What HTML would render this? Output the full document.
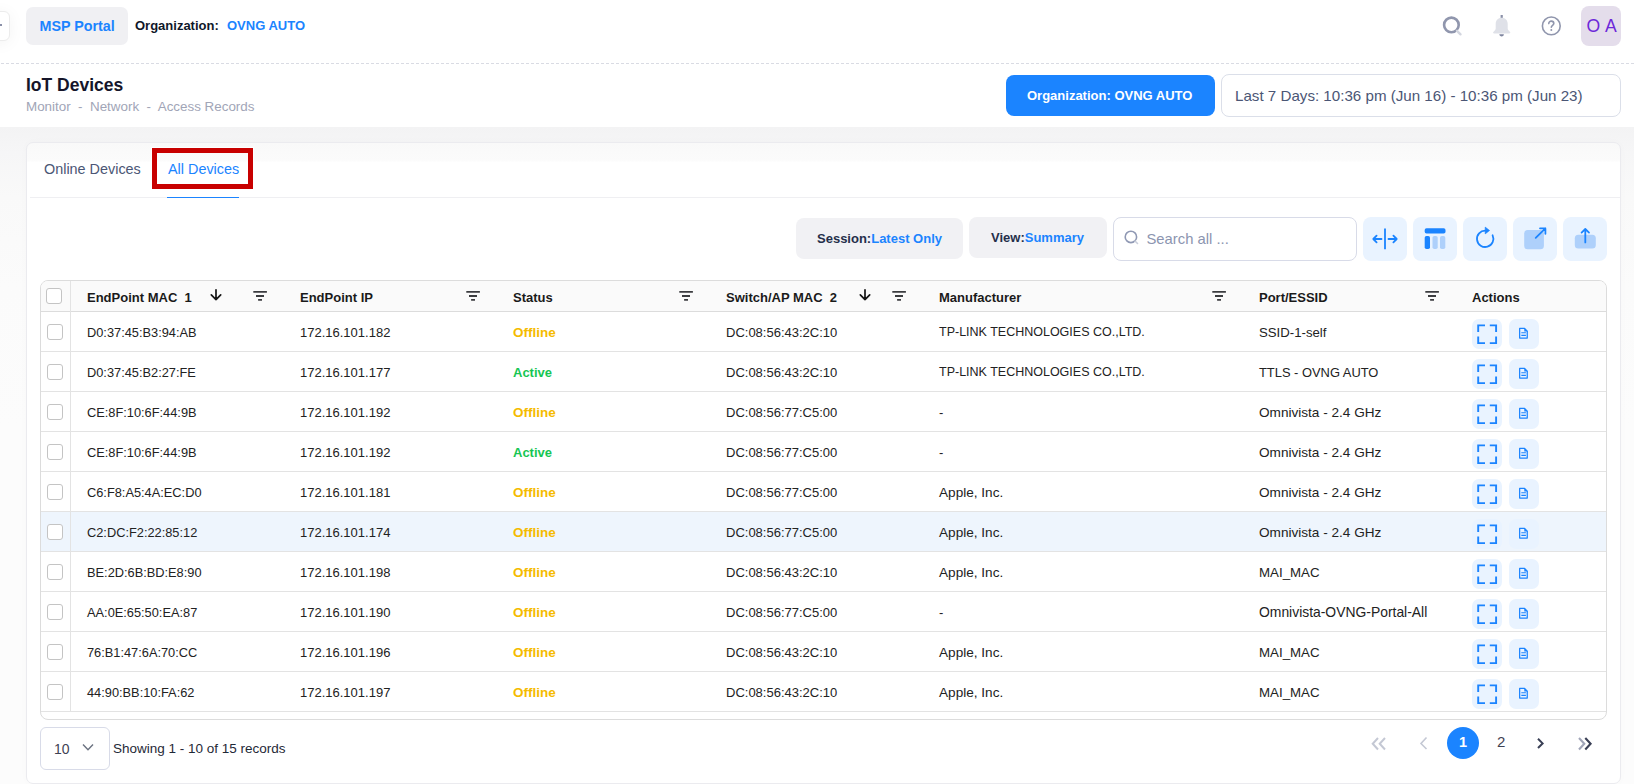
<!DOCTYPE html>
<html><head><meta charset="utf-8">
<style>
*{box-sizing:border-box;margin:0;padding:0}
html,body{width:1634px;height:784px;overflow:hidden;background:#fff;font-family:"Liberation Sans",sans-serif;position:relative}
.a{position:absolute}
.t{position:absolute;white-space:pre;line-height:1}
svg{position:absolute;overflow:visible}
#gray{left:0;top:127px;width:1634px;height:657px;background:linear-gradient(180deg,#f3f3f4 0px,#f6f6f7 25px,#f9f9f9 70px,#fbfbfb 160px,#fcfcfc 300px,#fcfcfc 657px)}
#card{left:26px;top:142px;width:1595px;height:642px;background:linear-gradient(180deg,#f9f9f9 0px,#fbfbfb 17px,#fff 19.5px);border:1px solid #ebebef;border-radius:7px;box-shadow:0 0 8px rgba(0,0,0,0.02)}
.btn-ic{position:absolute;top:217px;width:44px;height:44px;background:#e9f3ff;border-radius:8px}
.row{position:absolute;left:41px;width:1565px;height:40px;border-bottom:1px solid #e4e4e4}
.cb{position:absolute;width:16px;height:16px;border:1px solid #c4c4c4;border-radius:3px;background:#fff}
.cell{position:absolute;white-space:pre;line-height:1;font-size:13px;color:#222}
.act{position:absolute;width:30px;height:30px;background:#e9f3ff;border-radius:7px}
</style></head><body>

<!-- top bar -->
<div class="a" style="left:-22px;top:11px;width:32px;height:30px;border:1px solid #ececec;border-radius:6px;box-shadow:0 2px 16px rgba(0,0,0,0.05);background:#fff"></div><div class="a" style="left:0;top:24px;width:2px;height:1.5px;background:#8a90a8"></div>
<div class="a" style="left:26px;top:7px;width:102px;height:38px;background:#f0f0f3;border-radius:7px"></div>
<div class="t" style="left:39.5px;top:18.7px;font-size:14.3px;font-weight:700;color:#1b84ff">MSP Portal</div>
<div class="t" style="left:135px;top:19px;font-size:13px;font-weight:700;color:#0f172a">Organization:</div>
<div class="t" style="left:227px;top:19px;font-size:13px;font-weight:700;color:#1b84ff">OVNG AUTO</div>

<div class="a" style="left:1px;top:63px;width:1633px;height:1px;background:repeating-linear-gradient(90deg,#d9dbe3 0 3px,transparent 3px 5px)"></div>

<!-- header -->
<div class="t" style="left:26px;top:77px;font-size:17.5px;font-weight:700;color:#15152a">IoT Devices</div>
<div class="t" style="left:26px;top:100px;font-size:13.4px;color:#a1a5b7">Monitor  -  Network  -  Access Records</div>
<div class="a" style="left:1006px;top:75px;width:209px;height:41px;background:#1b84ff;border-radius:8px"></div>
<div class="t" style="left:1027px;top:89px;font-size:13px;font-weight:700;color:#fff">Organization: OVNG AUTO</div>
<div class="a" style="left:1221px;top:74px;width:400px;height:43px;border:1px solid #dbdfe9;border-radius:8px"></div>
<div class="t" style="left:1235px;top:88px;font-size:15.15px;color:#4b5675">Last 7 Days: 10:36 pm (Jun 16) - 10:36 pm (Jun 23)</div>

<div id="gray" class="a"></div>
<div id="card" class="a"></div>

<!-- tabs -->
<div class="t" style="left:44px;top:162px;font-size:14.4px;color:#4b5675">Online Devices</div>
<div class="t" style="left:168px;top:162px;font-size:14.4px;color:#1b84ff">All Devices</div>
<div class="a" style="left:30px;top:197px;width:1590px;height:1px;background:#efeff2"></div>
<div class="a" style="left:167px;top:197px;width:72px;height:1px;background:#1b84ff;box-shadow:0 0 0.5px #1b84ff"></div>
<div class="a" style="left:152px;top:148px;width:101px;height:41px;border:5px solid #c80000;box-shadow:0 0 0 1px rgba(255,255,255,0.9)"></div>


<!-- toolbar -->
<div class="a" style="left:796px;top:218px;width:167px;height:41px;background:#f1f1f4;border-radius:8px"></div>
<div class="t" style="left:817px;top:232px;font-size:13px;font-weight:700;color:#252f4a">Session:<span style="color:#1b84ff">Latest Only</span></div>
<div class="a" style="left:969px;top:217px;width:138px;height:41px;background:#f1f1f4;border-radius:8px"></div>
<div class="t" style="left:991px;top:231px;font-size:13px;font-weight:700;color:#252f4a">View:<span style="color:#1b84ff">Summary</span></div>
<div class="a" style="left:1113px;top:217px;width:244px;height:44px;border:1px solid #d8dbe8;border-radius:8px;background:#fff"></div>
<svg style="left:1124px;top:230px" width="16" height="16" viewBox="0 0 16 16"><circle cx="6.9" cy="6.9" r="5.7" fill="none" stroke="#8f98b3" stroke-width="1.6"/><line x1="11" y1="11" x2="13.5" y2="13.5" stroke="#c9cedb" stroke-width="1.6" stroke-linecap="round"/></svg>
<div class="t" style="left:1146.5px;top:231.5px;font-size:14.8px;color:#8c95b0">Search all ...</div>

<div class="btn-ic" style="left:1363px"></div>
<div class="btn-ic" style="left:1413px"></div>
<div class="btn-ic" style="left:1463px"></div>
<div class="btn-ic" style="left:1513px"></div>
<div class="btn-ic" style="left:1563px"></div>

<svg style="left:1363px;top:217px" width="44" height="44" viewBox="0 0 44 44">
 <line x1="22" y1="11.6" x2="22" y2="32.2" stroke="#1b84ff" stroke-width="1.8"/>
 <path d="M10.3 22H18.5M13.6 18.6L10.3 22L13.6 25.4" fill="none" stroke="#1b84ff" stroke-width="1.8" stroke-linecap="round" stroke-linejoin="round"/>
 <path d="M25.5 22H33.7M30.4 18.6L33.7 22L30.4 25.4" fill="none" stroke="#1b84ff" stroke-width="1.8" stroke-linecap="round" stroke-linejoin="round"/>
</svg>
<svg style="left:1413px;top:217px" width="44" height="44" viewBox="0 0 44 44">
 <rect x="11.7" y="11.3" width="20.8" height="5.2" rx="1.8" fill="#1b84ff"/>
 <rect x="11.7" y="19" width="5.3" height="13" rx="1.8" fill="#1b84ff"/>
 <rect x="19.5" y="19" width="5.2" height="13" rx="1.8" fill="#aed0fb"/>
 <rect x="27" y="19" width="5.3" height="13" rx="1.8" fill="#aed0fb"/>
</svg>
<svg style="left:1463px;top:217px" width="44" height="44" viewBox="0 0 44 44">
 <path d="M22.4 13.6A8.2 8.2 0 1 0 29.6 18.3" fill="none" stroke="#1b84ff" stroke-width="1.8" stroke-linecap="round"/>
 <path d="M22.2 10.1L26.6 13.5L22.2 16.9Z" fill="#1b84ff" stroke="#1b84ff" stroke-width="0.6" stroke-linejoin="round"/>
</svg>
<svg style="left:1513px;top:217px" width="44" height="44" viewBox="0 0 44 44">
 <rect x="11.2" y="12.9" width="19.7" height="19.4" rx="3.5" fill="#aed0fb"/>
 <path d="M22.7 20.8L32.4 11.3M27 11.3H32.4V16.8" fill="none" stroke="#1b84ff" stroke-width="1.8" stroke-linecap="round" stroke-linejoin="round"/>
</svg>
<svg style="left:1563px;top:217px" width="44" height="44" viewBox="0 0 44 44">
 <rect x="11.8" y="17.8" width="21" height="13.8" rx="3.5" fill="#aed0fb"/>
 <path d="M22.3 25.4V12M18.6 15.6L22.3 12L26 15.6" fill="none" stroke="#1b84ff" stroke-width="1.8" stroke-linecap="round" stroke-linejoin="round"/>
</svg>

<div class="a" style="left:40px;top:280px;width:1567px;height:440px;border:1px solid #dcdcdc;border-radius:8px;overflow:hidden;background:#fff">
<div class="a" style="left:0;top:0;width:1565px;height:31px;background:#fafafa;border-bottom:1px solid #dcdcdc"></div>
</div>
<div class="a" style="left:41px;top:512px;width:1565px;height:39px;background:#eef5fd"></div>
<div class="a" style="left:41px;top:351px;width:1565px;height:1px;background:#e3e3e3"></div>
<div class="a" style="left:41px;top:391px;width:1565px;height:1px;background:#e3e3e3"></div>
<div class="a" style="left:41px;top:431px;width:1565px;height:1px;background:#e3e3e3"></div>
<div class="a" style="left:41px;top:471px;width:1565px;height:1px;background:#e3e3e3"></div>
<div class="a" style="left:41px;top:511px;width:1565px;height:1px;background:#e3e3e3"></div>
<div class="a" style="left:41px;top:551px;width:1565px;height:1px;background:#e3e3e3"></div>
<div class="a" style="left:41px;top:591px;width:1565px;height:1px;background:#e3e3e3"></div>
<div class="a" style="left:41px;top:631px;width:1565px;height:1px;background:#e3e3e3"></div>
<div class="a" style="left:41px;top:671px;width:1565px;height:1px;background:#e3e3e3"></div>
<div class="a" style="left:41px;top:711px;width:1565px;height:1px;background:#e3e3e3"></div>
<div class="a" style="left:70px;top:281px;width:1px;height:430px;background:#e3e3e3"></div>
<div class="cell" style="left:87px;top:291px;font-weight:700;color:#1a1a1a">EndPoint MAC  1</div>
<div class="cell" style="left:300px;top:291px;font-weight:700;color:#1a1a1a">EndPoint IP</div>
<div class="cell" style="left:513px;top:291px;font-weight:700;color:#1a1a1a">Status</div>
<div class="cell" style="left:726px;top:291px;font-weight:700;color:#1a1a1a">Switch/AP MAC  2</div>
<div class="cell" style="left:939px;top:291px;font-weight:700;color:#1a1a1a">Manufacturer</div>
<div class="cell" style="left:1259px;top:291px;font-weight:700;color:#1a1a1a">Port/ESSID</div>
<div class="cell" style="left:1472px;top:291px;font-weight:700;color:#1a1a1a">Actions</div>
<svg style="left:210px;top:290px" width="12" height="12" viewBox="0 0 12 12"><path d="M6 -0.2V9.6M1.3 4.8L6 9.6L10.7 4.8" fill="none" stroke="#151515" stroke-width="1.7" stroke-linecap="round" stroke-linejoin="round"/></svg>
<svg style="left:859px;top:290px" width="12" height="12" viewBox="0 0 12 12"><path d="M6 -0.2V9.6M1.3 4.8L6 9.6L10.7 4.8" fill="none" stroke="#151515" stroke-width="1.7" stroke-linecap="round" stroke-linejoin="round"/></svg>
<svg style="left:253px;top:290px" width="14" height="11" viewBox="0 0 14 11"><path d="M0.3 1.9H13.9M3 6H11M5.1 9.9H9" fill="none" stroke="#3c3d40" stroke-width="1.8"/></svg>
<svg style="left:466px;top:290px" width="14" height="11" viewBox="0 0 14 11"><path d="M0.3 1.9H13.9M3 6H11M5.1 9.9H9" fill="none" stroke="#3c3d40" stroke-width="1.8"/></svg>
<svg style="left:678.5px;top:290px" width="14" height="11" viewBox="0 0 14 11"><path d="M0.3 1.9H13.9M3 6H11M5.1 9.9H9" fill="none" stroke="#3c3d40" stroke-width="1.8"/></svg>
<svg style="left:892px;top:290px" width="14" height="11" viewBox="0 0 14 11"><path d="M0.3 1.9H13.9M3 6H11M5.1 9.9H9" fill="none" stroke="#3c3d40" stroke-width="1.8"/></svg>
<svg style="left:1211.5px;top:290px" width="14" height="11" viewBox="0 0 14 11"><path d="M0.3 1.9H13.9M3 6H11M5.1 9.9H9" fill="none" stroke="#3c3d40" stroke-width="1.8"/></svg>
<svg style="left:1425px;top:290px" width="14" height="11" viewBox="0 0 14 11"><path d="M0.3 1.9H13.9M3 6H11M5.1 9.9H9" fill="none" stroke="#3c3d40" stroke-width="1.8"/></svg>
<div class="cb" style="left:46px;top:288px;width:15.5px;height:15.5px"></div>
<div class="cb" style="left:47px;top:324px"></div>
<div class="cell" style="left:87px;top:326px;font-size:12.8px;line-height:13px;">D0:37:45:B3:94:AB</div>
<div class="cell" style="left:300px;top:326px;">172.16.101.182</div>
<div class="cell" style="left:513px;top:326px;font-size:13.5px;line-height:13px;font-weight:700;color:#f5bb00">Offline</div>
<div class="cell" style="left:726px;top:326px;">DC:08:56:43:2C:10</div>
<div class="cell" style="left:939px;top:326px;font-size:12.5px;line-height:13px;">TP-LINK TECHNOLOGIES CO.,LTD.</div>
<div class="cell" style="left:1259px;top:326px;font-size:13.2px;line-height:13px;">SSID-1-self</div>
<div class="act" style="left:1472px;top:319px"></div>
<div class="act" style="left:1509px;top:319px"></div>
<svg style="left:1472px;top:319px" width="30" height="30" viewBox="0 0 30 30"><path d="M6.2 13V6.4H13M17.8 6.4H24.1V13M24.1 17.6V24.1H17.8M13 24.1H6.2V17.6" fill="none" stroke="#1b84ff" stroke-width="1.9"/></svg>
<svg style="left:1509px;top:319px" width="30" height="30" viewBox="0 0 30 30"><path d="M10.65 9.45H15.6L18.25 12.1V19.05H10.65Z" fill="none" stroke="#1b84ff" stroke-width="1.25" stroke-linejoin="round"/><path d="M15.3 9.1L18.8 12.6H15.3Z" fill="#1b84ff"/><path d="M12.3 13.7H16.9M12.3 16.3H16.9" stroke="#1b84ff" stroke-width="1.15"/></svg>
<div class="cb" style="left:47px;top:364px"></div>
<div class="cell" style="left:87px;top:366px;font-size:12.8px;line-height:13px;">D0:37:45:B2:27:FE</div>
<div class="cell" style="left:300px;top:366px;">172.16.101.177</div>
<div class="cell" style="left:513px;top:366px;font-weight:700;color:#17c653">Active</div>
<div class="cell" style="left:726px;top:366px;">DC:08:56:43:2C:10</div>
<div class="cell" style="left:939px;top:366px;font-size:12.5px;line-height:13px;">TP-LINK TECHNOLOGIES CO.,LTD.</div>
<div class="cell" style="left:1259px;top:366px;font-size:12.9px;line-height:13px;">TTLS - OVNG AUTO</div>
<div class="act" style="left:1472px;top:359px"></div>
<div class="act" style="left:1509px;top:359px"></div>
<svg style="left:1472px;top:359px" width="30" height="30" viewBox="0 0 30 30"><path d="M6.2 13V6.4H13M17.8 6.4H24.1V13M24.1 17.6V24.1H17.8M13 24.1H6.2V17.6" fill="none" stroke="#1b84ff" stroke-width="1.9"/></svg>
<svg style="left:1509px;top:359px" width="30" height="30" viewBox="0 0 30 30"><path d="M10.65 9.45H15.6L18.25 12.1V19.05H10.65Z" fill="none" stroke="#1b84ff" stroke-width="1.25" stroke-linejoin="round"/><path d="M15.3 9.1L18.8 12.6H15.3Z" fill="#1b84ff"/><path d="M12.3 13.7H16.9M12.3 16.3H16.9" stroke="#1b84ff" stroke-width="1.15"/></svg>
<div class="cb" style="left:47px;top:404px"></div>
<div class="cell" style="left:87px;top:406px;font-size:12.8px;line-height:13px;">CE:8F:10:6F:44:9B</div>
<div class="cell" style="left:300px;top:406px;">172.16.101.192</div>
<div class="cell" style="left:513px;top:406px;font-size:13.5px;line-height:13px;font-weight:700;color:#f5bb00">Offline</div>
<div class="cell" style="left:726px;top:406px;">DC:08:56:77:C5:00</div>
<div class="cell" style="left:939px;top:406px;">-</div>
<div class="cell" style="left:1259px;top:406px;font-size:13.6px;line-height:13px;">Omnivista - 2.4 GHz</div>
<div class="act" style="left:1472px;top:399px"></div>
<div class="act" style="left:1509px;top:399px"></div>
<svg style="left:1472px;top:399px" width="30" height="30" viewBox="0 0 30 30"><path d="M6.2 13V6.4H13M17.8 6.4H24.1V13M24.1 17.6V24.1H17.8M13 24.1H6.2V17.6" fill="none" stroke="#1b84ff" stroke-width="1.9"/></svg>
<svg style="left:1509px;top:399px" width="30" height="30" viewBox="0 0 30 30"><path d="M10.65 9.45H15.6L18.25 12.1V19.05H10.65Z" fill="none" stroke="#1b84ff" stroke-width="1.25" stroke-linejoin="round"/><path d="M15.3 9.1L18.8 12.6H15.3Z" fill="#1b84ff"/><path d="M12.3 13.7H16.9M12.3 16.3H16.9" stroke="#1b84ff" stroke-width="1.15"/></svg>
<div class="cb" style="left:47px;top:444px"></div>
<div class="cell" style="left:87px;top:446px;font-size:12.8px;line-height:13px;">CE:8F:10:6F:44:9B</div>
<div class="cell" style="left:300px;top:446px;">172.16.101.192</div>
<div class="cell" style="left:513px;top:446px;font-weight:700;color:#17c653">Active</div>
<div class="cell" style="left:726px;top:446px;">DC:08:56:77:C5:00</div>
<div class="cell" style="left:939px;top:446px;">-</div>
<div class="cell" style="left:1259px;top:446px;font-size:13.6px;line-height:13px;">Omnivista - 2.4 GHz</div>
<div class="act" style="left:1472px;top:439px"></div>
<div class="act" style="left:1509px;top:439px"></div>
<svg style="left:1472px;top:439px" width="30" height="30" viewBox="0 0 30 30"><path d="M6.2 13V6.4H13M17.8 6.4H24.1V13M24.1 17.6V24.1H17.8M13 24.1H6.2V17.6" fill="none" stroke="#1b84ff" stroke-width="1.9"/></svg>
<svg style="left:1509px;top:439px" width="30" height="30" viewBox="0 0 30 30"><path d="M10.65 9.45H15.6L18.25 12.1V19.05H10.65Z" fill="none" stroke="#1b84ff" stroke-width="1.25" stroke-linejoin="round"/><path d="M15.3 9.1L18.8 12.6H15.3Z" fill="#1b84ff"/><path d="M12.3 13.7H16.9M12.3 16.3H16.9" stroke="#1b84ff" stroke-width="1.15"/></svg>
<div class="cb" style="left:47px;top:484px"></div>
<div class="cell" style="left:87px;top:486px;font-size:12.8px;line-height:13px;">C6:F8:A5:4A:EC:D0</div>
<div class="cell" style="left:300px;top:486px;">172.16.101.181</div>
<div class="cell" style="left:513px;top:486px;font-size:13.5px;line-height:13px;font-weight:700;color:#f5bb00">Offline</div>
<div class="cell" style="left:726px;top:486px;">DC:08:56:77:C5:00</div>
<div class="cell" style="left:939px;top:486px;font-size:13.6px;line-height:13px;">Apple, Inc.</div>
<div class="cell" style="left:1259px;top:486px;font-size:13.6px;line-height:13px;">Omnivista - 2.4 GHz</div>
<div class="act" style="left:1472px;top:479px"></div>
<div class="act" style="left:1509px;top:479px"></div>
<svg style="left:1472px;top:479px" width="30" height="30" viewBox="0 0 30 30"><path d="M6.2 13V6.4H13M17.8 6.4H24.1V13M24.1 17.6V24.1H17.8M13 24.1H6.2V17.6" fill="none" stroke="#1b84ff" stroke-width="1.9"/></svg>
<svg style="left:1509px;top:479px" width="30" height="30" viewBox="0 0 30 30"><path d="M10.65 9.45H15.6L18.25 12.1V19.05H10.65Z" fill="none" stroke="#1b84ff" stroke-width="1.25" stroke-linejoin="round"/><path d="M15.3 9.1L18.8 12.6H15.3Z" fill="#1b84ff"/><path d="M12.3 13.7H16.9M12.3 16.3H16.9" stroke="#1b84ff" stroke-width="1.15"/></svg>
<div class="cb" style="left:47px;top:524px"></div>
<div class="cell" style="left:87px;top:526px;font-size:12.8px;line-height:13px;">C2:DC:F2:22:85:12</div>
<div class="cell" style="left:300px;top:526px;">172.16.101.174</div>
<div class="cell" style="left:513px;top:526px;font-size:13.5px;line-height:13px;font-weight:700;color:#f5bb00">Offline</div>
<div class="cell" style="left:726px;top:526px;">DC:08:56:77:C5:00</div>
<div class="cell" style="left:939px;top:526px;font-size:13.6px;line-height:13px;">Apple, Inc.</div>
<div class="cell" style="left:1259px;top:526px;font-size:13.6px;line-height:13px;">Omnivista - 2.4 GHz</div>
<div class="act" style="left:1472px;top:519px"></div>
<div class="act" style="left:1509px;top:519px"></div>
<svg style="left:1472px;top:519px" width="30" height="30" viewBox="0 0 30 30"><path d="M6.2 13V6.4H13M17.8 6.4H24.1V13M24.1 17.6V24.1H17.8M13 24.1H6.2V17.6" fill="none" stroke="#1b84ff" stroke-width="1.9"/></svg>
<svg style="left:1509px;top:519px" width="30" height="30" viewBox="0 0 30 30"><path d="M10.65 9.45H15.6L18.25 12.1V19.05H10.65Z" fill="none" stroke="#1b84ff" stroke-width="1.25" stroke-linejoin="round"/><path d="M15.3 9.1L18.8 12.6H15.3Z" fill="#1b84ff"/><path d="M12.3 13.7H16.9M12.3 16.3H16.9" stroke="#1b84ff" stroke-width="1.15"/></svg>
<div class="cb" style="left:47px;top:564px"></div>
<div class="cell" style="left:87px;top:566px;font-size:12.8px;line-height:13px;">BE:2D:6B:BD:E8:90</div>
<div class="cell" style="left:300px;top:566px;">172.16.101.198</div>
<div class="cell" style="left:513px;top:566px;font-size:13.5px;line-height:13px;font-weight:700;color:#f5bb00">Offline</div>
<div class="cell" style="left:726px;top:566px;">DC:08:56:43:2C:10</div>
<div class="cell" style="left:939px;top:566px;font-size:13.6px;line-height:13px;">Apple, Inc.</div>
<div class="cell" style="left:1259px;top:566px;font-size:13.3px;line-height:13px;">MAI_MAC</div>
<div class="act" style="left:1472px;top:559px"></div>
<div class="act" style="left:1509px;top:559px"></div>
<svg style="left:1472px;top:559px" width="30" height="30" viewBox="0 0 30 30"><path d="M6.2 13V6.4H13M17.8 6.4H24.1V13M24.1 17.6V24.1H17.8M13 24.1H6.2V17.6" fill="none" stroke="#1b84ff" stroke-width="1.9"/></svg>
<svg style="left:1509px;top:559px" width="30" height="30" viewBox="0 0 30 30"><path d="M10.65 9.45H15.6L18.25 12.1V19.05H10.65Z" fill="none" stroke="#1b84ff" stroke-width="1.25" stroke-linejoin="round"/><path d="M15.3 9.1L18.8 12.6H15.3Z" fill="#1b84ff"/><path d="M12.3 13.7H16.9M12.3 16.3H16.9" stroke="#1b84ff" stroke-width="1.15"/></svg>
<div class="cb" style="left:47px;top:604px"></div>
<div class="cell" style="left:87px;top:606px;font-size:12.8px;line-height:13px;">AA:0E:65:50:EA:87</div>
<div class="cell" style="left:300px;top:606px;">172.16.101.190</div>
<div class="cell" style="left:513px;top:606px;font-size:13.5px;line-height:13px;font-weight:700;color:#f5bb00">Offline</div>
<div class="cell" style="left:726px;top:606px;">DC:08:56:77:C5:00</div>
<div class="cell" style="left:939px;top:606px;">-</div>
<div class="cell" style="left:1259px;top:606px;font-size:13.9px;line-height:13px;">Omnivista-OVNG-Portal-All</div>
<div class="act" style="left:1472px;top:599px"></div>
<div class="act" style="left:1509px;top:599px"></div>
<svg style="left:1472px;top:599px" width="30" height="30" viewBox="0 0 30 30"><path d="M6.2 13V6.4H13M17.8 6.4H24.1V13M24.1 17.6V24.1H17.8M13 24.1H6.2V17.6" fill="none" stroke="#1b84ff" stroke-width="1.9"/></svg>
<svg style="left:1509px;top:599px" width="30" height="30" viewBox="0 0 30 30"><path d="M10.65 9.45H15.6L18.25 12.1V19.05H10.65Z" fill="none" stroke="#1b84ff" stroke-width="1.25" stroke-linejoin="round"/><path d="M15.3 9.1L18.8 12.6H15.3Z" fill="#1b84ff"/><path d="M12.3 13.7H16.9M12.3 16.3H16.9" stroke="#1b84ff" stroke-width="1.15"/></svg>
<div class="cb" style="left:47px;top:644px"></div>
<div class="cell" style="left:87px;top:646px;font-size:12.8px;line-height:13px;">76:B1:47:6A:70:CC</div>
<div class="cell" style="left:300px;top:646px;">172.16.101.196</div>
<div class="cell" style="left:513px;top:646px;font-size:13.5px;line-height:13px;font-weight:700;color:#f5bb00">Offline</div>
<div class="cell" style="left:726px;top:646px;">DC:08:56:43:2C:10</div>
<div class="cell" style="left:939px;top:646px;font-size:13.6px;line-height:13px;">Apple, Inc.</div>
<div class="cell" style="left:1259px;top:646px;font-size:13.3px;line-height:13px;">MAI_MAC</div>
<div class="act" style="left:1472px;top:639px"></div>
<div class="act" style="left:1509px;top:639px"></div>
<svg style="left:1472px;top:639px" width="30" height="30" viewBox="0 0 30 30"><path d="M6.2 13V6.4H13M17.8 6.4H24.1V13M24.1 17.6V24.1H17.8M13 24.1H6.2V17.6" fill="none" stroke="#1b84ff" stroke-width="1.9"/></svg>
<svg style="left:1509px;top:639px" width="30" height="30" viewBox="0 0 30 30"><path d="M10.65 9.45H15.6L18.25 12.1V19.05H10.65Z" fill="none" stroke="#1b84ff" stroke-width="1.25" stroke-linejoin="round"/><path d="M15.3 9.1L18.8 12.6H15.3Z" fill="#1b84ff"/><path d="M12.3 13.7H16.9M12.3 16.3H16.9" stroke="#1b84ff" stroke-width="1.15"/></svg>
<div class="cb" style="left:47px;top:684px"></div>
<div class="cell" style="left:87px;top:686px;font-size:12.8px;line-height:13px;">44:90:BB:10:FA:62</div>
<div class="cell" style="left:300px;top:686px;">172.16.101.197</div>
<div class="cell" style="left:513px;top:686px;font-size:13.5px;line-height:13px;font-weight:700;color:#f5bb00">Offline</div>
<div class="cell" style="left:726px;top:686px;">DC:08:56:43:2C:10</div>
<div class="cell" style="left:939px;top:686px;font-size:13.6px;line-height:13px;">Apple, Inc.</div>
<div class="cell" style="left:1259px;top:686px;font-size:13.3px;line-height:13px;">MAI_MAC</div>
<div class="act" style="left:1472px;top:679px"></div>
<div class="act" style="left:1509px;top:679px"></div>
<svg style="left:1472px;top:679px" width="30" height="30" viewBox="0 0 30 30"><path d="M6.2 13V6.4H13M17.8 6.4H24.1V13M24.1 17.6V24.1H17.8M13 24.1H6.2V17.6" fill="none" stroke="#1b84ff" stroke-width="1.9"/></svg>
<svg style="left:1509px;top:679px" width="30" height="30" viewBox="0 0 30 30"><path d="M10.65 9.45H15.6L18.25 12.1V19.05H10.65Z" fill="none" stroke="#1b84ff" stroke-width="1.25" stroke-linejoin="round"/><path d="M15.3 9.1L18.8 12.6H15.3Z" fill="#1b84ff"/><path d="M12.3 13.7H16.9M12.3 16.3H16.9" stroke="#1b84ff" stroke-width="1.15"/></svg>

<div class="a" style="left:40px;top:727px;width:70px;height:43px;border:1px solid #d8dbe8;border-radius:6px;background:#fff"></div>
<div class="t" style="left:54px;top:742px;font-size:14px;color:#3f4254">10</div>
<svg style="left:82px;top:743px" width="12" height="9" viewBox="0 0 12 9"><path d="M1 1.5L6 6.8L11 1.5" fill="none" stroke="#6b7280" stroke-width="1.4"/></svg>
<div class="t" style="left:113px;top:742px;font-size:13.5px;color:#1f2937">Showing 1 - 10 of 15 records</div>
<svg style="left:1370px;top:735px" width="18" height="18" viewBox="0 0 18 18"><path d="M8 3L2.7 8.7L8 14.5M15 3L9.7 8.7L15 14.5" fill="none" stroke="#c4c8d4" stroke-width="2"/></svg>
<svg style="left:1418px;top:736px" width="12" height="14" viewBox="0 0 12 14"><path d="M8.5 1.5L3 7.5L8.5 13" fill="none" stroke="#c4c8d4" stroke-width="1.6"/></svg>
<div class="a" style="left:1447px;top:727px;width:32px;height:32px;border-radius:50%;background:#1b84ff"></div>
<div class="t" style="left:1447px;top:734.8px;width:32px;text-align:center;font-size:14.5px;font-weight:700;color:#fff">1</div>
<div class="t" style="left:1497px;top:734px;font-size:15px;color:#3f4254">2</div>
<svg style="left:1535px;top:736px" width="12" height="14" viewBox="0 0 12 14"><path d="M3 2.8L7.6 7.4L3 12" fill="none" stroke="#3a4056" stroke-width="2"/></svg>
<svg style="left:1576px;top:735px" width="18" height="18" viewBox="0 0 18 18"><path d="M3 3L8.3 8.7L3 14.5" fill="none" stroke="#a0a5b8" stroke-width="2.1"/><path d="M9.3 3L14.6 8.7L9.3 14.5" fill="none" stroke="#3a4056" stroke-width="2.1"/></svg>


<svg style="left:1440px;top:14px" width="24" height="24" viewBox="0 0 24 24"><circle cx="11.4" cy="10.9" r="7.3" fill="none" stroke="#9096ad" stroke-width="2.6"/><line x1="17" y1="16.8" x2="20.5" y2="20.3" stroke="#d3d6df" stroke-width="2.4" stroke-linecap="round"/></svg>
<svg style="left:1486px;top:10px" width="30" height="30" viewBox="0 0 30 30"><rect x="14.6" y="5" width="2.2" height="3" fill="#8a90a8"/><path d="M15.7 7.8C12.2 7.8 9.7 10.3 9.7 14V18.6C9.7 19.8 8.9 20.6 7.8 21.6C6.6 22.7 6.9 23.6 8.4 23.6H23C24.5 23.6 24.8 22.7 23.6 21.6C22.5 20.6 21.7 19.8 21.7 18.6V14C21.7 10.3 19.2 7.8 15.7 7.8Z" fill="#dfe1e8"/><path d="M13.4 24.2H17.9C17.9 25.5 16.9 26.4 15.65 26.4C14.4 26.4 13.4 25.5 13.4 24.2Z" fill="#7f86a0"/></svg>
<svg style="left:1540px;top:14px" width="24" height="24" viewBox="0 0 24 24"><circle cx="11.3" cy="11.9" r="8.9" fill="none" stroke="#9096ad" stroke-width="1.6"/><path d="M8.8 9.6C8.8 8 10 7.1 11.3 7.1C12.7 7.1 13.8 8 13.8 9.4C13.8 11.3 11.3 11.3 11.3 13.3" fill="none" stroke="#9096ad" stroke-width="1.6" stroke-linecap="round"/><circle cx="11.3" cy="16" r="1" fill="#9096ad"/></svg>
<div class="a" style="left:1581px;top:6px;width:40px;height:40px;background:#e4ddeb;border-radius:8px"></div>
<div class="t" style="left:1586.5px;top:17.5px;font-size:17.6px;color:#6d28d9;word-spacing:1px">O A</div>

</body></html>
